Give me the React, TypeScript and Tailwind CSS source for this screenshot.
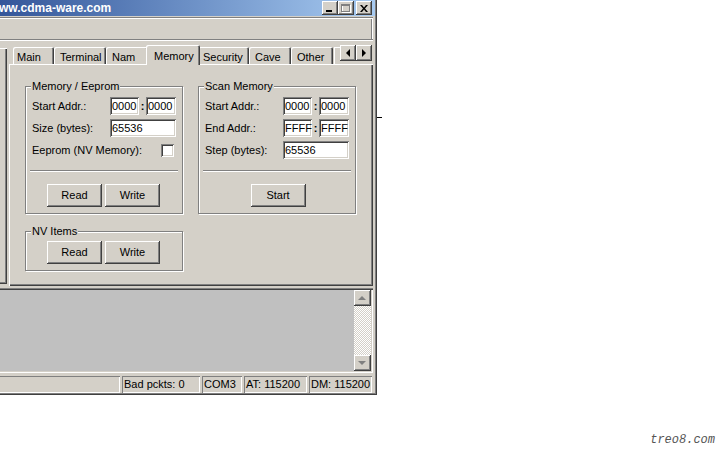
import React from "react";

const raised =
  "shadow-[inset_-1px_-1px_#404040,inset_1px_1px_#ffffff,inset_-2px_-2px_#808080,inset_2px_2px_#d4d0c8]";
const sunken =
  "shadow-[inset_1px_1px_#808080,inset_-1px_-1px_#ffffff,inset_2px_2px_#404040,inset_-2px_-2px_#d4d0c8]";
const thinSunken = "shadow-[inset_1px_1px_#808080,inset_-1px_-1px_#ffffff]";

function Btn({ label }: { label: string }) {
  return (
    <div className={`w-[55px] h-[23px] bg-[#d4d0c8] ${raised} flex items-center justify-center`}>
      {label}
    </div>
  );
}

function Input({ className, value }: { className: string; value: string }) {
  return (
    <div className={`h-[18px] bg-white ${sunken} flex items-center pl-[2px] ${className}`}>{value}</div>
  );
}

function Colon() {
  return <div className="w-[7px] flex justify-center font-bold">:</div>;
}

function Row({ label, children }: { label: string; children: React.ReactNode }) {
  return (
    <div className="h-[18px] flex items-center">
      <span className="w-[78px] shrink-0">{label}</span>
      {children}
    </div>
  );
}

function Group({
  title,
  className,
  children,
}: {
  title: string;
  className: string;
  children: React.ReactNode;
}) {
  return (
    <div
      className={`border border-[#808080] shadow-[inset_1px_1px_#ffffff,1px_1px_#ffffff] flex flex-col ${className}`}
    >
      <span className="-mt-[7px] ml-[5px] px-[1px] self-start bg-[#d4d0c8] leading-[13px]">{title}</span>
      {children}
    </div>
  );
}

function Sep() {
  return <div className="mx-[4px] mt-[11px] h-[2px] border-t border-t-[#808080] bg-white" />;
}

function Tab({ label, className }: { label: string; className: string }) {
  return (
    <div
      className={`h-[17px] bg-[#d4d0c8] shadow-[inset_1px_1px_#ffffff,inset_-1px_0_#404040,inset_-2px_0_#808080] rounded-t-[2px] pt-[4px] leading-[13px] whitespace-nowrap overflow-hidden ${className}`}
    >
      {label}
    </div>
  );
}

function Arrow({ dir }: { dir: "l" | "r" | "u" | "d" }) {
  const pts: Record<string, string> = {
    l: "5,0 5,8 1,4",
    r: "1,0 1,8 5,4",
    u: "4,1 0,5 8,5",
    d: "0,1 8,1 4,5",
  };
  const horiz = dir === "l" || dir === "r";
  return (
    <svg width={horiz ? 6 : 9} height={horiz ? 9 : 6} viewBox={horiz ? "0 0 6 9" : "0 0 9 6"}>
      <polygon points={pts[dir]} fill={horiz ? "#000" : "#808080"} />
    </svg>
  );
}

export default function App() {
  return (
    <div className="w-[720px] h-[450px] bg-white flex flex-col font-['Liberation_Sans',Arial,sans-serif] text-[11px] leading-[13px] text-black overflow-hidden">
      <div className="flex">
        {/* window */}
        <div className="w-[377px] h-[395px] bg-[#d4d0c8] flex flex-col pr-[4px] pb-[2px] shadow-[inset_-1px_-1px_#404040,inset_-2px_-2px_#808080]">
          {/* title bar */}
          <div className="h-[16px] -mr-[2px] bg-linear-to-r from-[#34569a] to-[#a8cbf1] flex items-center justify-between pr-[3px]">
            <span className="-ml-[1px] text-white font-bold text-[12px] leading-[14px]">ww.cdma-ware.com</span>
            <div className="flex items-center">
              <div className={`w-[16px] h-[14px] bg-[#d4d0c8] ${raised} flex items-end pl-[4px] pb-[3px]`}>
                <div className="w-[6px] h-[2px] bg-black" />
              </div>
              <div className={`w-[16px] h-[14px] bg-[#d4d0c8] ${raised} flex items-center justify-center`}>
                <svg width="10" height="9" viewBox="0 0 10 9">
                  <rect x="1.5" y="1.5" width="8" height="7" fill="none" stroke="#ffffff" />
                  <rect x="0.5" y="0.5" width="8" height="7" fill="none" stroke="#808080" />
                  <line x1="0" y1="1.5" x2="9" y2="1.5" stroke="#808080" />
                </svg>
              </div>
              <div className={`ml-[2px] w-[16px] h-[14px] bg-[#d4d0c8] ${raised} flex items-center justify-center`}>
                <svg width="8" height="7" viewBox="0 0 8 7">
                  <path d="M0 0 L2 0 L4 2.5 L6 0 L8 0 L5 3.5 L8 7 L6 7 L4 4.5 L2 7 L0 7 L3 3.5 Z" fill="#000" />
                </svg>
              </div>
            </div>
          </div>

          {/* toolbar area */}
          <div className="h-[26px] pt-[1px]">
            <div className="h-[24px] shadow-[inset_0_1px_#808080,inset_0_2px_#ffffff,inset_0_-1px_#ffffff,inset_0_-2px_#808080,inset_-1px_0_#ffffff,inset_-2px_0_#808080]" />
          </div>

          {/* main row */}
          <div className="flex h-[244px]">
            <div className="w-[9px] pt-[6px] pb-[2px]">
              <div className="w-[7px] h-full shadow-[inset_0_1px_#ffffff,inset_-1px_-1px_#404040,inset_-2px_-2px_#808080]" />
            </div>
            <div className="w-[364px] flex flex-col">
              {/* tab headers */}
              <div className="h-[22px] flex items-end pl-[4px]">
                <Tab label="Main" className="w-[41px] pl-[4px]" />
                <Tab label="Terminal" className="w-[52px] pl-[6px]" />
                <Tab label="Nam" className="w-[42px] pl-[6px]" />
                <div className="relative z-10 -mx-[2px] -mb-[1px] w-[54px] h-[20px] bg-[#d4d0c8] shadow-[inset_1px_1px_#ffffff,inset_-1px_0_#404040,inset_-2px_0_#808080] rounded-t-[2px] pt-[5px] pl-[8px] leading-[13px]">
                  Memory
                </div>
                <Tab label="Security" className="w-[51px] pl-[5px]" />
                <Tab label="Cave" className="w-[42px] pl-[6px]" />
                <Tab label="Other" className="w-[42px] pl-[6px]" />
                <div className="ml-[1px] w-[6px] h-[17px] shadow-[inset_1px_1px_#ffffff]" />
                <div className={`mb-[3px] w-[16px] h-[16px] bg-[#d4d0c8] ${raised} flex items-center justify-center`}>
                  <Arrow dir="l" />
                </div>
                <div className={`mb-[3px] w-[16px] h-[16px] bg-[#d4d0c8] ${raised} flex items-center justify-center`}>
                  <Arrow dir="r" />
                </div>
              </div>
              {/* tab page */}
              <div className="h-[222px] bg-[#d4d0c8] shadow-[inset_1px_1px_#ffffff,inset_-1px_-1px_#404040,inset_-2px_-2px_#808080] flex items-start gap-[15px] pl-[16px] pt-[22px]">
                <div className="flex flex-col">
                  <Group title="Memory / Eeprom" className="w-[158px] pb-[6px]">
                    <div className="mt-[4px] pl-[6px] flex flex-col gap-[4px]">
                      <Row label="Start Addr.:">
                        <Input className="w-[29px]" value="0000" />
                        <Colon />
                        <Input className="w-[30px]" value="0000" />
                      </Row>
                      <Row label="Size (bytes):">
                        <Input className="w-[66px]" value="65536" />
                      </Row>
                      <div className="h-[18px] w-[142px] flex items-center justify-between">
                        <span>Eeprom (NV Memory):</span>
                        <div className={`w-[13px] h-[13px] bg-white ${sunken}`} />
                      </div>
                    </div>
                    <Sep />
                    <div className="mt-[12px] pl-[21px] flex gap-[3px]">
                      <Btn label="Read" />
                      <Btn label="Write" />
                    </div>
                  </Group>
                  <Group title="NV Items" className="mt-[17px] w-[158px] pb-[6px]">
                    <div className="mt-[3px] pl-[21px] flex gap-[3px]">
                      <Btn label="Read" />
                      <Btn label="Write" />
                    </div>
                  </Group>
                </div>
                <Group title="Scan Memory" className="w-[158px] pb-[6px]">
                  <div className="mt-[4px] pl-[6px] flex flex-col gap-[4px]">
                    <Row label="Start Addr.:">
                      <Input className="w-[29px]" value="0000" />
                      <Colon />
                      <Input className="w-[30px]" value="0000" />
                    </Row>
                    <Row label="End Addr.:">
                      <Input className="w-[29px]" value="FFFF" />
                      <Colon />
                      <Input className="w-[30px]" value="FFFF" />
                    </Row>
                    <Row label="Step (bytes):">
                      <Input className="w-[66px]" value="65536" />
                    </Row>
                  </div>
                  <Sep />
                  <div className="mt-[12px] flex justify-center pl-[2px]">
                    <Btn label="Start" />
                  </div>
                </Group>
              </div>
            </div>
          </div>

          {/* log area */}
          <div className="pt-[2px]">
            <div className="h-[85px] bg-[#c0c0c0] shadow-[inset_0_1px_#808080,inset_0_2px_#404040,inset_-1px_-1px_#ffffff,inset_-2px_-2px_#d4d0c8] flex justify-end pr-[2px] py-[2px]">
              <div className="w-[17px] flex flex-col bg-[image:repeating-conic-gradient(#d4d0c8_0_25%,#ffffff_0_50%)] bg-[length:2px_2px]">
                <div className={`h-[16px] bg-[#d4d0c8] ${raised} flex items-center justify-center`}>
                  <Arrow dir="u" />
                </div>
                <div className="flex-1" />
                <div className={`h-[16px] bg-[#d4d0c8] ${raised} flex items-center justify-center`}>
                  <Arrow dir="d" />
                </div>
              </div>
            </div>
          </div>

          {/* status bar */}
          <div className="h-[20px] pt-[3px] flex gap-[2px]">
            <div className="w-[120px] h-[17px] shadow-[inset_0_1px_#808080,inset_-1px_-1px_#ffffff]" />
            <div className={`w-[78px] h-[17px] ${thinSunken} flex items-center pl-[2px]`}>Bad pckts: 0</div>
            <div className={`w-[40px] h-[17px] ${thinSunken} flex items-center pl-[2px]`}>COM3</div>
            <div className={`w-[63px] h-[17px] ${thinSunken} flex items-center pl-[2px]`}>AT: 115200</div>
            <div className={`w-[63px] h-[17px] ${thinSunken} flex items-center pl-[2px]`}>DM: 115200</div>
          </div>
        </div>
        <div className="w-[5px] pt-[117px]">
          <div className="h-[1px] bg-black" />
        </div>
      </div>
      <div className="flex justify-end pr-[5px] pt-[38px]">
        <span className="font-['Liberation_Mono',monospace] italic text-[12px] leading-[14px] text-[#555555]">treo8.com</span>
      </div>
    </div>
  );
}
